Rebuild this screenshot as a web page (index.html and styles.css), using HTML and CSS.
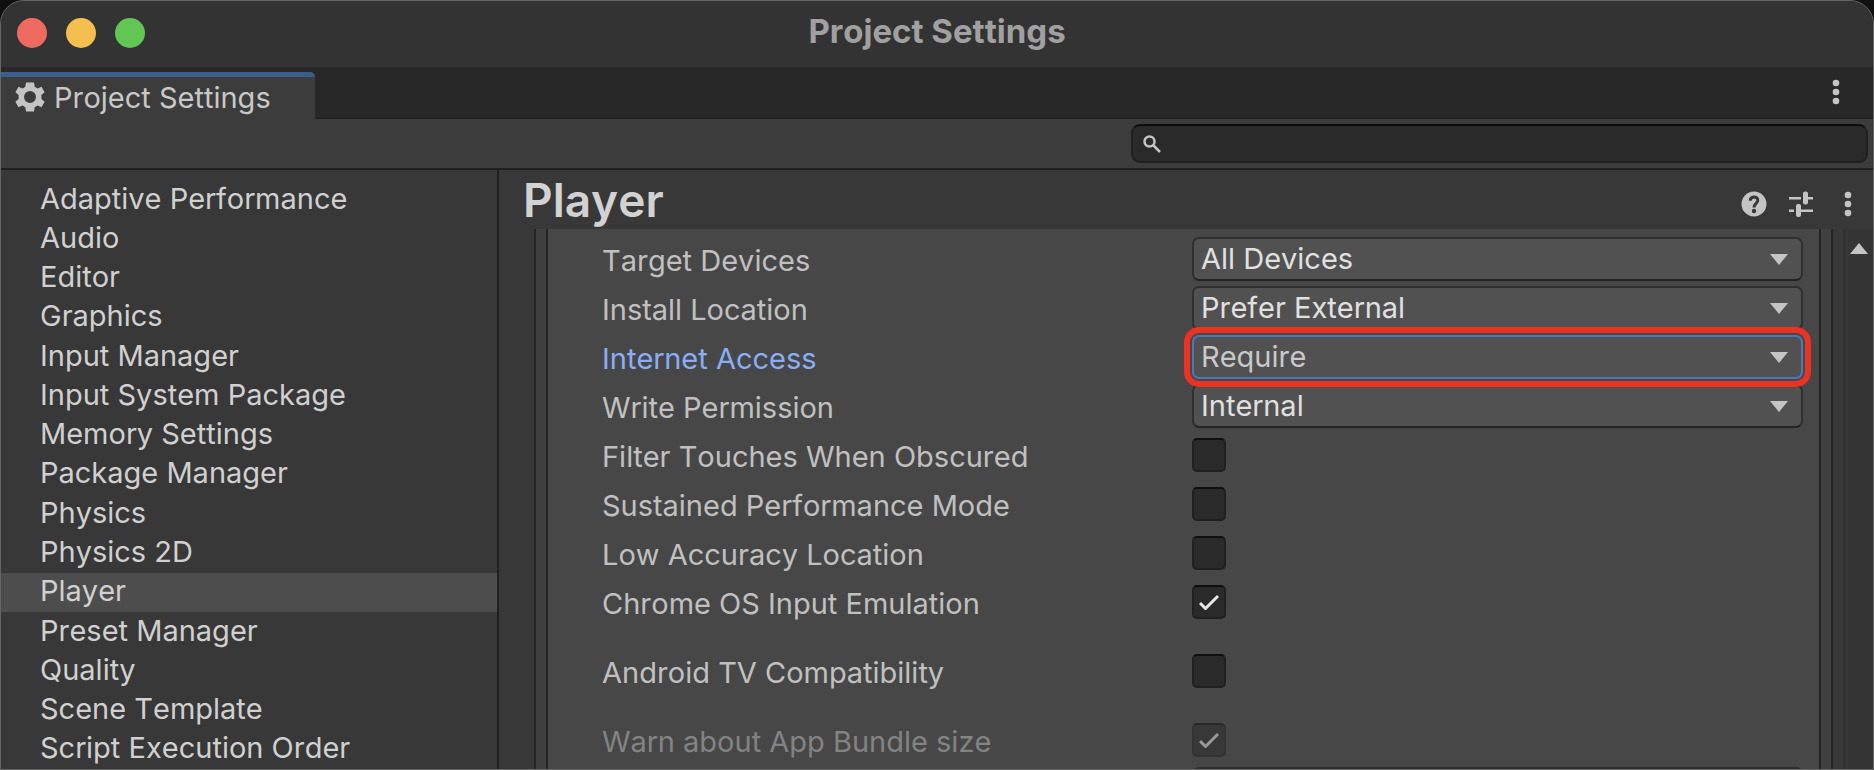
FILE: index.html
```html
<!DOCTYPE html>
<html lang="en">
<head>
<meta charset="utf-8">
<title>Project Settings</title>
<link rel="stylesheet" href="styles.css">
</head>
<body>
<div class="window">
  <header class="titlebar">
    <div class="lights">
      <button class="light close" aria-label="Close"></button>
      <button class="light minimize" aria-label="Minimize"></button>
      <button class="light zoom" aria-label="Zoom"></button>
    </div>
    <h1 class="title">Project Settings</h1>
  </header>

  <div class="tabs">
    <button class="tab">
      <svg class="gear" viewBox="0 0 30 30" aria-hidden="true">
        <path fill-rule="evenodd" d="M11 0.500H19L19.700 4.800L22.500 6.400L26.500 4.700L29.600 10.300L26.400 13V17L29.600 19.700L26.500 25.300L22.500 23.600L19.700 25.200L19 29.500H11L10.300 25.200L7.500 23.600L3.500 25.300L0.400 19.700L3.600 17V13L0.400 10.300L3.500 4.700L7.500 6.400L10.300 4.800ZM15 9A6 6 0 1 0 15 21A6 6 0 1 0 15 9Z"/>
      </svg>
      <span>Project Settings</span>
    </button>
    <button class="icon-button tab-menu" aria-label="Window menu">
      <svg class="dots" viewBox="0 0 8 26"><circle cx="4" cy="4" r="3.300"/><circle cx="4" cy="13" r="3.300"/><circle cx="4" cy="22" r="3.300"/></svg>
    </button>
  </div>

  <div class="toolbar">
    <label class="search">
      <svg class="glass" viewBox="0 0 18 18" aria-hidden="true"><circle cx="6.500" cy="6.500" r="5"/><path d="M10.500 10.500L17 17"/></svg>
      <input type="text" aria-label="Search settings">
    </label>
  </div>

  <div class="body">
    <nav class="sidebar">
      <a href="#">Adaptive Performance</a>
      <a href="#">Audio</a>
      <a href="#">Editor</a>
      <a href="#">Graphics</a>
      <a href="#">Input Manager</a>
      <a href="#">Input System Package</a>
      <a href="#">Memory Settings</a>
      <a href="#">Package Manager</a>
      <a href="#">Physics</a>
      <a href="#">Physics 2D</a>
      <a href="#" class="selected" aria-current="page">Player</a>
      <a href="#">Preset Manager</a>
      <a href="#">Quality</a>
      <a href="#">Scene Template</a>
      <a href="#">Script Execution Order</a>
    </nav>

    <main class="main">
      <div class="heading">
        <h2>Player</h2>
        <div class="actions">
          <button class="icon-button" aria-label="Help">
            <svg class="icon" viewBox="0 0 26 26"><circle cx="13" cy="13" r="12.500"/><path class="cut-line" d="M9.200 9.800C9.200 4.700 16.800 4.700 16.800 9.300C16.800 12.200 13 12.600 13 16.500"/><circle class="cut" cx="13" cy="20" r="2.200"/></svg>
          </button>
          <button class="icon-button" aria-label="Presets">
            <svg class="icon" viewBox="0 0 26 26"><path d="M1 6H13V8.500H1ZM20 6H25V8.500H20ZM1 18.500H6V21H1ZM13 18.500H25V21H13Z"/><rect x="15" y="0.500" width="5" height="13" rx="2"/><rect x="8" y="13" width="5" height="13" rx="2"/></svg>
          </button>
          <button class="icon-button" aria-label="More">
            <svg class="dots" viewBox="0 0 8 26"><circle cx="4" cy="4" r="3.300"/><circle cx="4" cy="13" r="3.300"/><circle cx="4" cy="22" r="3.300"/></svg>
          </button>
        </div>
      </div>

      <div class="scroll">
        <div class="outer-box">
          <form class="settings">
            <div class="row">
              <label for="devices">Target Devices</label>
              <div class="drop"><select id="devices"><option>All Devices</option></select><svg class="arrow" viewBox="0 0 18 11"><path d="M0 0H18L9 11Z"/></svg></div>
            </div>
            <div class="row">
              <label for="location">Install Location</label>
              <div class="drop"><select id="location"><option>Prefer External</option></select><svg class="arrow" viewBox="0 0 18 11"><path d="M0 0H18L9 11Z"/></svg></div>
            </div>
            <div class="row active">
              <label for="internet">Internet Access</label>
              <div class="drop"><select id="internet"><option>Require</option></select><svg class="arrow" viewBox="0 0 18 11"><path d="M0 0H18L9 11Z"/></svg></div>
            </div>
            <div class="row">
              <label for="write">Write Permission</label>
              <div class="drop"><select id="write"><option>Internal</option></select><svg class="arrow" viewBox="0 0 18 11"><path d="M0 0H18L9 11Z"/></svg></div>
            </div>
            <div class="row">
              <label for="filter">Filter Touches When Obscured</label>
              <div class="check"><input type="checkbox" id="filter"></div>
            </div>
            <div class="row">
              <label for="sustained">Sustained Performance Mode</label>
              <div class="check"><input type="checkbox" id="sustained"></div>
            </div>
            <div class="row">
              <label for="accuracy">Low Accuracy Location</label>
              <div class="check"><input type="checkbox" id="accuracy"></div>
            </div>
            <div class="row">
              <label for="chrome">Chrome OS Input Emulation</label>
              <div class="check"><input type="checkbox" id="chrome" checked><svg class="tick" viewBox="0 0 20 16"><path d="M1 9L6.500 14.500L19 2"/></svg></div>
            </div>
            <div class="row spaced">
              <label for="tv">Android TV Compatibility</label>
              <div class="check"><input type="checkbox" id="tv"></div>
            </div>
            <div class="row spaced disabled">
              <label for="warn">Warn about App Bundle size</label>
              <div class="check"><input type="checkbox" id="warn" checked disabled><svg class="tick" viewBox="0 0 20 16"><path d="M1 9L6.500 14.500L19 2"/></svg></div>
            </div>
            <div class="row">
              <span></span>
              <div class="drop"><input class="field" type="text" aria-label="App Bundle size threshold"></div>
            </div>
          </form>
        </div>
        <div class="scrollbar">
          <button class="icon-button" aria-label="Scroll up"><svg class="arrow-up" viewBox="0 0 18 11"><path d="M0 11H18L9 0Z"/></svg></button>
        </div>
      </div>
    </main>
  </div>
</div>
</body>
</html>
```
FILE: styles.css
```css
* {
  box-sizing: border-box;
}

body {
  margin: 0;
  background: #101010;
  color: #c8c8c8;
  font-family: Inter, "Liberation Sans", sans-serif;
  font-size: 29px;
  font-kerning: none;
}

button,
input,
select {
  margin: 0;
  padding: 0;
  border: 0;
  color: inherit;
  font: inherit;
  font-kerning: none;
}

h1,
h2 {
  margin: 0;
}

svg {
  display: block;
  fill: #c4c4c4;
}

.window {
  display: flex;
  flex-direction: column;
  height: 100vh;
  overflow: hidden;
  border: 1px solid #666;
  border-radius: 24px 24px 0 0;
  background: #383838;
}

.titlebar {
  display: grid;
  grid-template-columns: 1fr auto 1fr;
  align-items: center;
  height: 66px;
  padding: 0 16px 2px;
  background: #333;
}

.lights {
  display: flex;
  gap: 19px;
}

.light {
  width: 30px;
  height: 30px;
  border-radius: 50%;
}

.close { background: #ee6a5f; }
.minimize { background: #f5bf4f; }
.zoom { background: #62c655; }

.title {
  padding-bottom: 4px;
  color: #a0a0a0;
  font-size: 33px;
  font-weight: 700;
  line-height: 40px;
}

.tabs {
  display: flex;
  align-items: flex-end;
  justify-content: space-between;
  height: 52px;
  padding-right: 33px;
  background: linear-gradient(#282828 50px, #222 50px);
}

.tab {
  display: flex;
  align-items: center;
  gap: 9px;
  width: 314px;
  height: 47px;
  padding: 0 0 2px 14px;
  border-top: 5px solid #3a5f8c;
  border-top-right-radius: 5px;
  background: #3c3c3c;
}

.gear {
  width: 30px;
  height: 30px;
}

.icon-button {
  background: none;
}

.tab-menu {
  align-self: center;
  padding-bottom: 2px;
}

.dots {
  width: 8px;
  height: 26px;
}

.toolbar {
  display: flex;
  justify-content: flex-end;
  height: 51px;
  padding: 5px 5px 0 0;
  border-bottom: 2px solid #202020;
  background: #3c3c3c;
}

.search {
  display: flex;
  align-items: center;
  gap: 8px;
  width: 737px;
  height: 39px;
  padding: 0 10px;
  border: 2px solid #202020;
  border-top-color: #0d0d0d;
  border-radius: 9px;
  background: #2a2a2a;
}

.search input {
  flex: 1;
  min-width: 0;
  outline: none;
  background: none;
}

.glass {
  width: 18px;
  height: 18px;
  fill: none;
  stroke: #c4c4c4;
  stroke-width: 2.500;
}

.body {
  display: flex;
  flex: 1;
  min-height: 0;
}

.sidebar {
  display: flex;
  flex-direction: column;
  width: 498px;
  padding-top: 10px;
  border-right: 2px solid #202020;
}

.sidebar a {
  display: flex;
  flex: 1;
  align-items: center;
  padding: 0 0 2px 39px;
  color: #d0d0d0;
  line-height: 36px;
  text-decoration: none;
}

.sidebar .selected {
  background: #4d4d4d;
}

.main {
  display: flex;
  flex: 1;
  flex-direction: column;
  min-width: 0;
}

.heading {
  display: flex;
  align-items: center;
  justify-content: space-between;
  height: 59px;
  padding: 0 21px 0 24px;
}

.heading h2 {
  padding-top: 2px;
  color: #d2d2d2;
  font-size: 46px;
  font-weight: 600;
  line-height: 57px;
}

.actions {
  display: flex;
  gap: 21px;
  padding-top: 9px;
}

.actions .icon-button:last-child {
  padding-left: 9px;
}

.icon {
  width: 26px;
  height: 26px;
}

.cut { fill: #383838; }

.cut-line {
  fill: none;
  stroke: #383838;
  stroke-width: 3;
}

.scroll {
  display: flex;
  flex: 1;
  min-height: 0;
  padding-left: 35px;
}

.outer-box {
  flex: 1;
  min-width: 0;
  margin-right: 10px;
  padding: 0 10px;
  overflow: hidden;
  border: solid #242424;
  border-width: 0 2px;
  background: #404040;
}

.settings {
  display: flex;
  flex-direction: column;
  gap: 5px;
  height: 100%;
  padding: 8px 16px 0 54px;
  border: solid #242424;
  border-width: 0 2px;
  background: #474747;
}

.row {
  display: grid;
  flex: none;
  grid-template-columns: 590fr 611fr;
  align-items: center;
  height: 44px;
  color: #c0c0c0;
}

.row label {
  padding-top: 2px;
}

.spaced {
  margin-top: 20px;
}

.drop {
  position: relative;
}

.drop select,
.field {
  display: block;
  width: 100%;
  height: 44px;
  padding: 0 40px 2px 7px;
  appearance: none;
  border: 2px solid #303030;
  border-bottom-color: #242424;
  border-radius: 7px;
  background: #515151;
  color: #e0e0e0;
}

.arrow {
  position: absolute;
  top: 17px;
  right: 15px;
  width: 18px;
  height: 11px;
  pointer-events: none;
}

.active label {
  color: #8aaef5;
}

.active select {
  border-color: #4a78b8;
  outline: 6px solid #ea3323;
  outline-offset: 2px;
  color: #c8c8c8;
}

.active .drop {
  z-index: 1;
}

.check {
  position: relative;
  width: 34px;
  height: 34px;
}

.check input {
  display: block;
  width: 34px;
  height: 34px;
  appearance: none;
  border: 2px solid #202020;
  border-top-color: #0f0f0f;
  border-radius: 5px;
  background: #2a2a2a;
}

.tick {
  position: absolute;
  top: 9px;
  left: 7px;
  width: 20px;
  height: 16px;
  fill: none;
  stroke: #e8e8e8;
  stroke-width: 3;
  pointer-events: none;
}

.disabled label {
  color: #838383;
}

.disabled .check {
  opacity: 0.500;
}

.scrollbar {
  display: flex;
  align-items: flex-start;
  justify-content: center;
  width: 30px;
  padding-top: 14px;
  border-left: 2px solid #303030;
  background: #353535;
}

.arrow-up {
  width: 18px;
  height: 11px;
}
```
